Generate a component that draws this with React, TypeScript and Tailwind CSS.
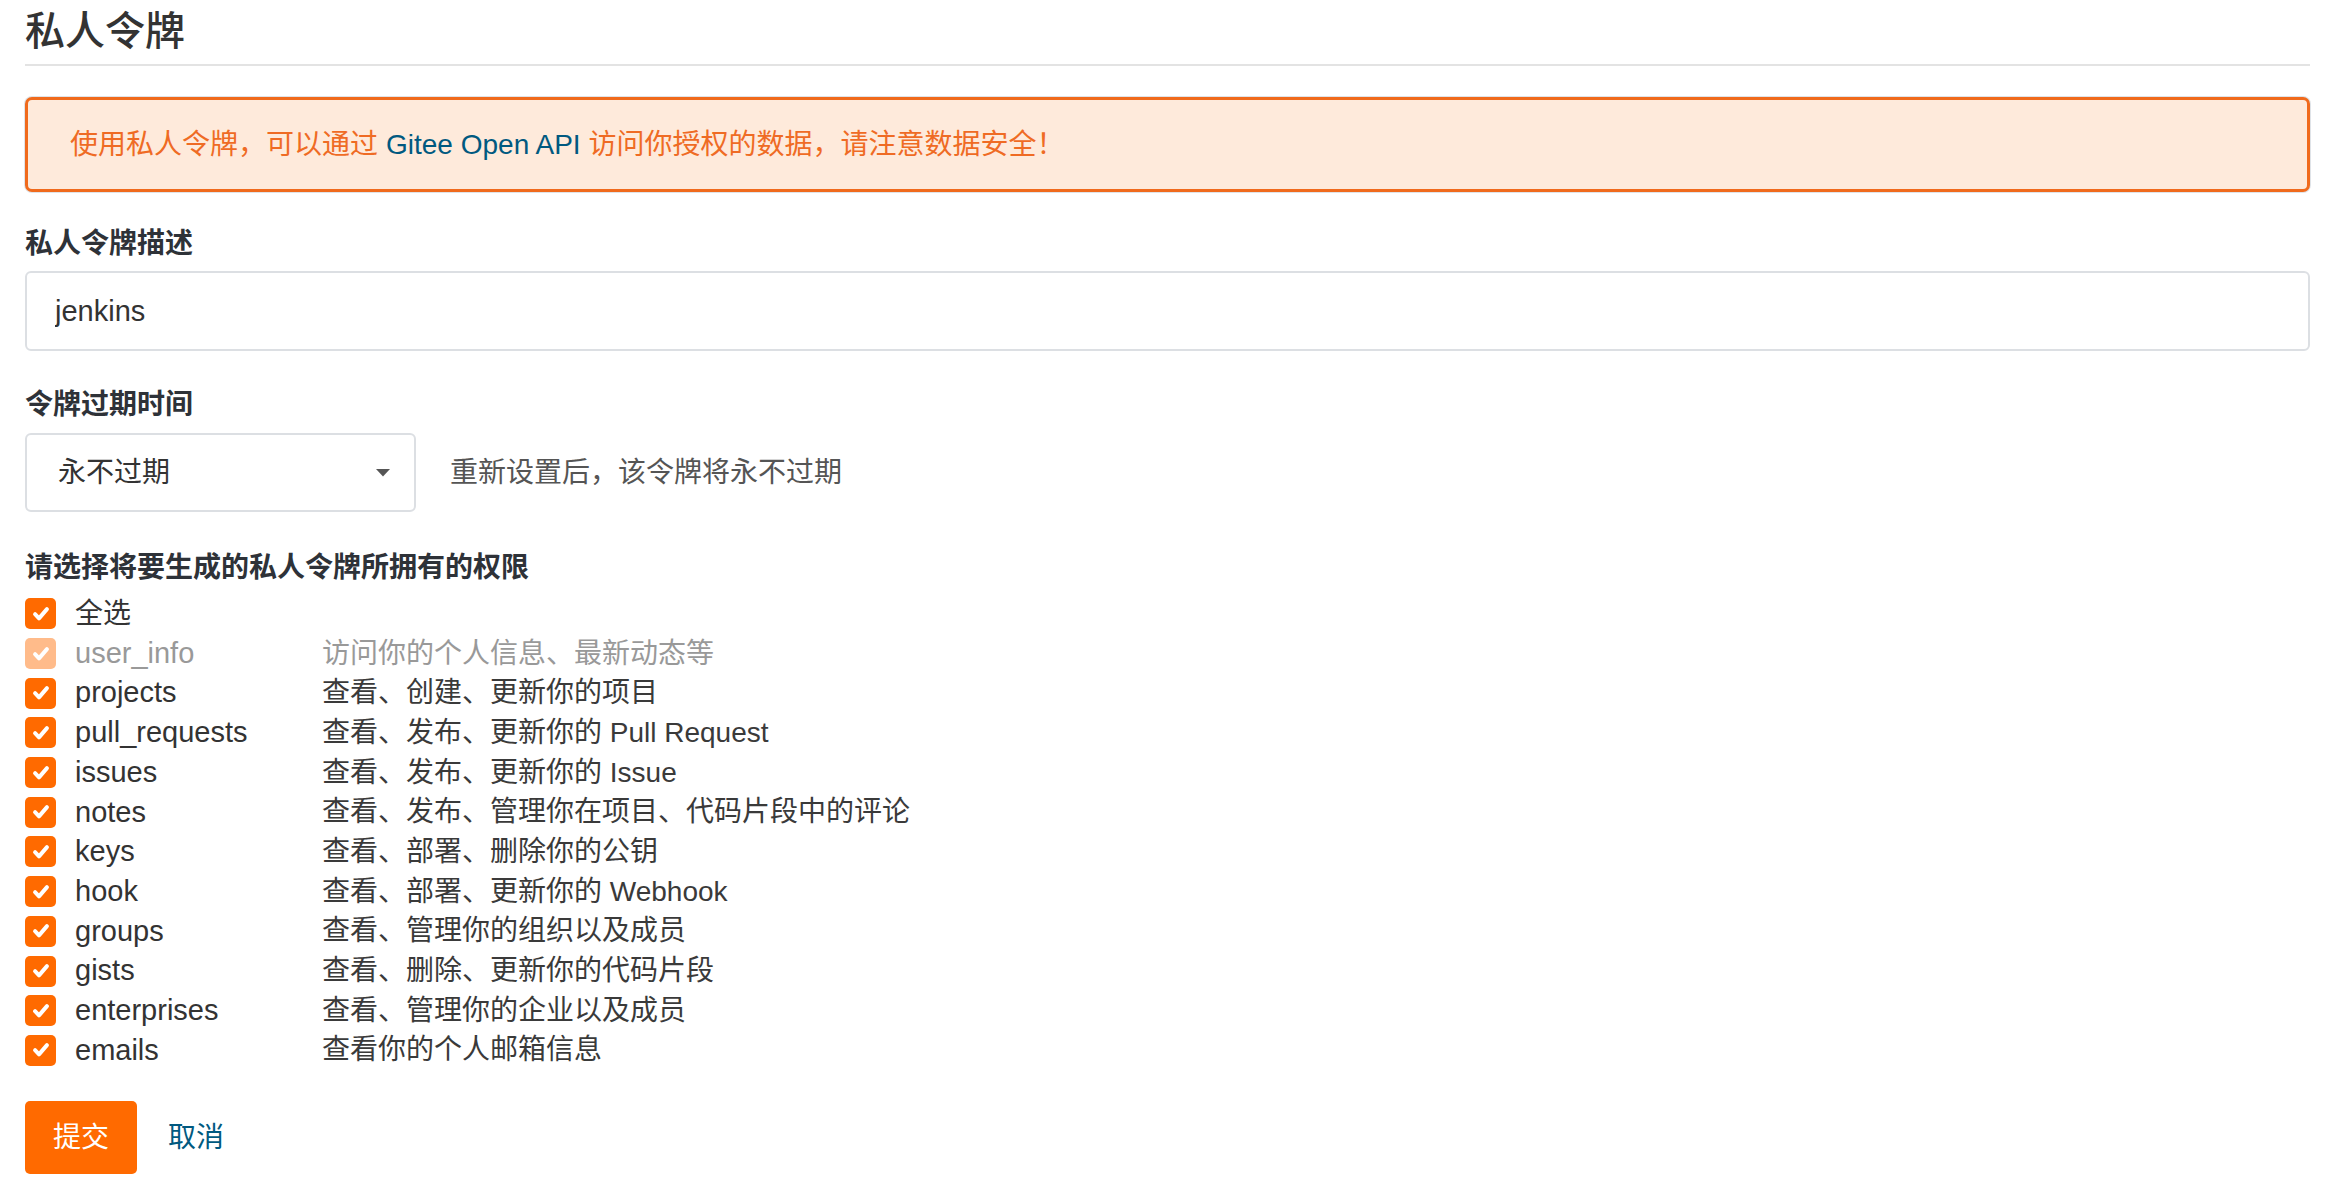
import React from 'react'

const FONT = '[font-family:"Liberation_Sans","Noto_Sans_CJK_SC",sans-serif]'

type Scope = {
  name: string
  desc: string
  disabled?: boolean
}

const SCOPES: Scope[] = [
  { name: 'user_info', desc: '访问你的个人信息、最新动态等', disabled: true },
  { name: 'projects', desc: '查看、创建、更新你的项目' },
  { name: 'pull_requests', desc: '查看、发布、更新你的 Pull Request' },
  { name: 'issues', desc: '查看、发布、更新你的 Issue' },
  { name: 'notes', desc: '查看、发布、管理你在项目、代码片段中的评论' },
  { name: 'keys', desc: '查看、部署、删除你的公钥' },
  { name: 'hook', desc: '查看、部署、更新你的 Webhook' },
  { name: 'groups', desc: '查看、管理你的组织以及成员' },
  { name: 'gists', desc: '查看、删除、更新你的代码片段' },
  { name: 'enterprises', desc: '查看、管理你的企业以及成员' },
  { name: 'emails', desc: '查看你的个人邮箱信息' },
]

function CheckBox({ disabled }: { disabled?: boolean }) {
  return (
    <span
      className={
        disabled
          ? 'flex h-[31px] w-[31px] shrink-0 items-center justify-center rounded-[5px] bg-[#ffbb8a]'
          : 'flex h-[31px] w-[31px] shrink-0 items-center justify-center rounded-[5px] bg-[#ff6a00]'
      }
    >
      <svg viewBox="0 0 20 20" className="h-[22px] w-[22px]" aria-hidden="true">
        <polyline
          points="4.6,10.2 8.2,14 15.4,5.6"
          fill="none"
          stroke="#fff"
          strokeWidth="3.6"
          strokeLinecap="round"
          strokeLinejoin="round"
        />
      </svg>
    </span>
  )
}

export default function App() {
  return (
    <div className={`${FONT} min-h-[1194px] bg-white pl-[25px] pr-[42px] text-[28px] text-[#333]`}>
      <h1 className="mt-[7px] border-b-2 border-[#e3e3e3] pb-[9px] text-[40px] leading-[48px] font-medium text-[#333]">
        私人令牌
      </h1>

      <div className="mt-[31px] flex h-[95px] items-center rounded-[7px] border-[3px] border-[#f06a1c] bg-[#feeadb] pl-[42px] shadow-[0_0_0_1px_#dfe3e8] text-[#ef6b24]">
        使用私人令牌，可以通过 <span className="mx-[8px] text-[#005980]">Gitee Open API</span> 访问你授权的数据，请注意数据安全！
      </div>

      <label className="mt-[32px] block leading-[40px] font-bold text-[#2e3238]">私人令牌描述</label>
      <input
        readOnly
        defaultValue="jenkins"
        className="mt-[7px] block h-[80px] w-full rounded-[6px] border-2 border-[#dcdfe3] px-[28px] text-[29px] text-[#333] outline-none"
      />

      <label className="mt-[34px] block leading-[40px] font-bold text-[#2e3238]">令牌过期时间</label>
      <div className="mt-[8px] flex items-center">
        <div className="flex h-[79px] w-[391px] items-center justify-between rounded-[6px] border-2 border-[#dcdfe3] pl-[31px] pr-[24px]">
          <span>永不过期</span>
          <svg viewBox="0 0 14 8" className="h-[8px] w-[14px]" aria-hidden="true">
            <polygon points="0,0 14,0 7,7.5" fill="#555" />
          </svg>
        </div>
        <span className="ml-[34px] text-[#555]">重新设置后，该令牌将永不过期</span>
      </div>

      <label className="mt-[36px] block leading-[40px] font-bold text-[#2e3238]">
        请选择将要生成的私人令牌所拥有的权限
      </label>
      <div className="mt-[6px]">
        <div className="flex h-[39.7px] items-center">
          <CheckBox />
          <span className="ml-[19px]">全选</span>
        </div>
        {SCOPES.map((scope) => (
          <div key={scope.name} className="flex h-[39.7px] items-center">
            <CheckBox disabled={scope.disabled} />
            <span
              className={
                scope.disabled
                  ? 'ml-[19px] w-[247px] text-[29px] text-[#999]'
                  : 'ml-[19px] w-[247px] text-[29px]'
              }
            >
              {scope.name}
            </span>
            <span className={scope.disabled ? 'text-[#999]' : 'text-[#3a3a3a]'}>{scope.desc}</span>
          </div>
        ))}
      </div>

      <div className="mt-[31px] flex items-center">
        <button className="h-[73px] w-[112px] rounded-[5px] bg-[#ff6a00] text-[28px] text-white">提交</button>
        <a href="#" className="ml-[31px] text-[#005980]">
          取消
        </a>
      </div>
    </div>
  )
}
